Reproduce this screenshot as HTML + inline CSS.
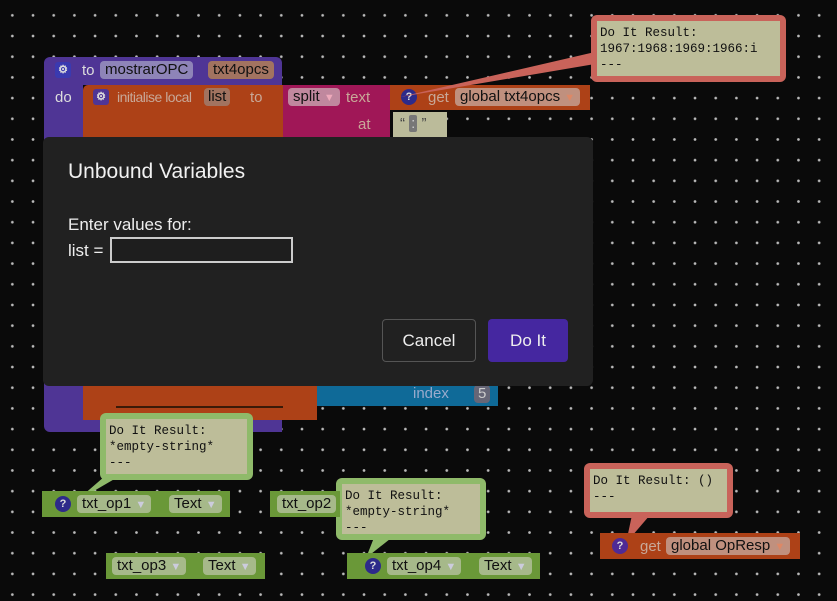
<!DOCTYPE html>
<html><head><style>
body{margin:0;width:837px;height:601px;overflow:hidden;background:#0a0a0a;font-family:"Liberation Sans",sans-serif;position:relative}
.grid{position:absolute;inset:0;background-image:radial-gradient(circle,#bbb 1.1px,transparent 1.6px);background-size:20.7px 20.7px;background-position:2px 5px}
.a{position:absolute}
.t{position:absolute;color:#ddd;font-size:15px;white-space:nowrap}
.f{position:absolute;border-radius:4px;font-size:15px;color:#111;padding:0 5px;height:18px;line-height:18px;white-space:nowrap}
.q{position:absolute;width:16px;height:16px;border-radius:50%;background:#2d2a8a;color:#ddd;font-size:11px;font-weight:bold;text-align:center;line-height:16px}
.cm{position:absolute;border-radius:6px;font-family:"Liberation Mono",monospace;font-size:12.5px;line-height:16px;color:#111;white-space:pre}
.cm div{position:absolute;left:6px;top:6px;right:6px;bottom:6px;background:#bdbd99;padding:4px 3px}
</style></head><body>
<div class="grid"></div>
<!-- procedure -->
<div class="a" style="left:44px;top:57px;width:238px;height:28px;background:#4f3595;border-radius:6px 6px 0 0"></div>
<div class="a" style="left:44px;top:85px;width:39px;height:335px;background:#4f3595"></div>
<div class="a" style="left:44px;top:405px;width:238px;height:27px;background:#4f3595;border-radius:0 0 0 6px"></div>
<div class="q" style="left:55px;top:62px;border-radius:3px;background:#3a3ab0">⚙</div>
<div class="t" style="left:82px;top:62px">to</div>
<div class="f" style="left:100px;top:61px;background:#8e84b8">mostrarOPC</div>
<div class="f" style="left:208px;top:61px;background:#a27360">txt4opcs</div>
<div class="t" style="left:55px;top:89px">do</div>
<div class="a" style="left:83px;top:85px;width:200px;height:335px;background:#ad4117;border-radius:5px 0 0 0"></div>
<div class="q" style="left:93px;top:89px;border-radius:3px;background:#4f3595">⚙</div>
<div class="t" style="left:117px;top:89px;color:#c8a898;font-size:14px;letter-spacing:-0.5px">initialise local</div>
<div class="f" style="left:204px;top:88px;background:#a27360;padding:0 4px">list</div>
<div class="t" style="left:250px;top:89px;color:#c8a898">to</div>
<div class="a" style="left:283px;top:85px;width:107px;height:52px;background:#a01757"></div>
<div class="f" style="left:288px;top:88px;background:#c0889e">split <span style="color:#eab;font-size:11px">▼</span></div>
<div class="t" style="left:346px;top:89px;color:#c8a898">text</div>
<div class="t" style="left:358px;top:116px;color:#c8a898">at</div>
<div class="a" style="left:390px;top:85px;width:200px;height:25px;background:#ad4117"></div>
<div class="q" style="left:401px;top:89px">?</div>
<div class="t" style="left:428px;top:89px;color:#c8a898">get</div>
<div class="f" style="left:455px;top:88px;background:#c0907e">global txt4opcs <span style="color:#d86;font-size:11px">▼</span></div>
<div class="a" style="left:393px;top:112px;width:54px;height:25px;background:#bbbb9a"></div>
<div class="t" style="left:400px;top:115px;color:#444">“ <span style="background:#777;color:#ccc;padding:0 2px;border-radius:2px">:</span> ”</div>
<!-- lower -->
<div class="a" style="left:283px;top:386px;width:34px;height:34px;background:#ad4117"></div>
<div class="a" style="left:116px;top:386px;width:167px;height:20px;background:#ad4117;border-bottom:2px solid #3a1a08"></div>
<div class="a" style="left:317px;top:386px;width:181px;height:20px;background:#0f6a98"></div>
<div class="t" style="left:413px;top:385px;color:#9ac">index</div>
<div class="f" style="left:474px;top:385px;background:#667;color:#ccc;padding:0 4px">5</div>
<!-- dialog -->
<div class="a" style="left:43px;top:137px;width:550px;height:249px;background:#212121;border-radius:6px"></div>
<div class="t" style="left:68px;top:160px;font-size:21px;color:#f2f2f2">Unbound Variables</div>
<div class="t" style="left:68px;top:215px;font-size:17px;color:#eee">Enter values for:</div>
<div class="t" style="left:68px;top:241px;font-size:17px;color:#eee">list =</div>
<div class="a" style="left:110px;top:237px;width:179px;height:22px;border:2px solid #ccc;background:#1e1e1e"></div>
<div class="a" style="left:382px;top:319px;width:92px;height:41px;border:1px solid #555;border-radius:4px;color:#eee;font-size:17px;text-align:center;line-height:41px">Cancel</div>
<div class="a" style="left:488px;top:319px;width:80px;height:43px;background:#4527a0;border-radius:4px;color:#eee;font-size:17px;text-align:center;line-height:43px">Do It</div>
<!-- comments -->
<svg class="a" style="left:0;top:0" width="837" height="601"><polygon points="400,97 595,52 595,64" fill="#c9635a"/><polygon points="75,502 112,470 130,470" fill="#8fba6a"/><polygon points="366,558 375,535 395,535" fill="#8fba6a"/><polygon points="626,543 632,515 650,515" fill="#c9635a"/></svg>
<div class="cm" style="left:591px;top:15px;width:195px;height:67px;background:#c9635a"><div>Do It Result:
1967:1968:1969:1966:i
---</div></div>
<div class="cm" style="left:100px;top:413px;width:153px;height:67px;background:#8fba6a"><div>Do It Result:
*empty-string*
---</div></div>
<div class="cm" style="left:336px;top:478px;width:150px;height:62px;background:#8fba6a"><div>Do It Result:
*empty-string*
---</div></div>
<div class="cm" style="left:584px;top:463px;width:149px;height:55px;background:#c9635a"><div>Do It Result: ()
---</div></div>
<!-- green blocks -->
<div class="a" style="left:42px;top:491px;width:188px;height:26px;background:#6a9838"></div>
<div class="q" style="left:55px;top:496px">?</div>
<div class="f" style="left:77px;top:495px;background:#a6b98a">txt_op1 <span style="color:#ccd;font-size:11px">▼</span></div>
<div class="f" style="left:169px;top:495px;background:#a6b98a">Text <span style="color:#ccd;font-size:11px">▼</span></div>
<div class="a" style="left:270px;top:491px;width:70px;height:26px;background:#6a9838"></div>
<div class="f" style="left:277px;top:495px;background:#a6b98a">txt_op2</div>
<div class="a" style="left:106px;top:553px;width:159px;height:26px;background:#6a9838"></div>
<div class="f" style="left:112px;top:557px;background:#a6b98a">txt_op3 <span style="color:#ccd;font-size:11px">▼</span></div>
<div class="f" style="left:203px;top:557px;background:#a6b98a">Text <span style="color:#ccd;font-size:11px">▼</span></div>
<div class="a" style="left:347px;top:553px;width:193px;height:26px;background:#6a9838"></div>
<div class="q" style="left:365px;top:558px">?</div>
<div class="f" style="left:387px;top:557px;background:#a6b98a">txt_op4 <span style="color:#ccd;font-size:11px">▼</span></div>
<div class="f" style="left:479px;top:557px;background:#a6b98a">Text <span style="color:#ccd;font-size:11px">▼</span></div>
<div class="a" style="left:600px;top:533px;width:200px;height:26px;background:#ad4117"></div>
<div class="q" style="left:612px;top:538px;background:#4f2a95">?</div>
<div class="t" style="left:640px;top:538px;color:#c8a898">get</div>
<div class="f" style="left:666px;top:537px;background:#c0907e">global OpResp <span style="color:#d86;font-size:11px">▼</span></div>
</body></html>
